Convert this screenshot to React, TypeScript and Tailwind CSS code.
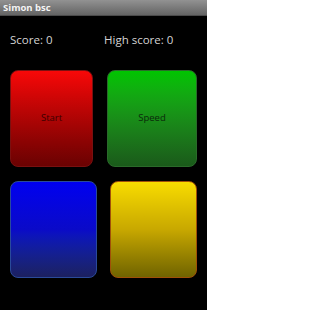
import React from "react";

export default function App() {
  return (
    <div className="w-[207px] h-[310px] bg-black overflow-hidden" style={{ fontFamily: '"Open Sans", "Noto Sans", sans-serif' }}>
      <div className="h-[16px] bg-gradient-to-b from-[#929292] to-[#646464] border-b border-[#4a4a4a] flex items-center pl-[3px]">
        <span className="text-[#f4f4f4] font-bold text-[9.5px] leading-none" style={{ fontFamily: '"Open Sans", sans-serif' }}>Simon bsc</span>
      </div>
      <div className="flex pt-[17px] h-[54px] text-[#d4d4d4] text-[11.5px] leading-[14px]">
        <div className="pl-[10px] w-[104px]">Score: 0</div>
        <div>High score: 0</div>
      </div>
      <div className="flex pl-[10px] gap-[14px]">
        <div className="w-[83px] h-[97px] rounded-[8px] border border-[#7a1010] bg-gradient-to-b from-[#f80808] to-[#6a0202] flex items-center justify-center">
          <span className="text-[9.5px] text-[#3a0000]">Start</span>
        </div>
        <div className="w-[90px] h-[97px] rounded-[8px] border border-[#2a6a2a] bg-gradient-to-b from-[#00c400] to-[#1a5a1a] flex items-center justify-center">
          <span className="text-[9.5px] text-[#0a2a0a]">Speed</span>
        </div>
      </div>
      <div className="flex pl-[10px] gap-[13px] mt-[14px]">
        <div className="w-[87px] h-[97px] rounded-[8px] border border-[#2a4a9a] bg-gradient-to-b from-[#0000f0] via-[#0a0ac8] to-[#1c2060]"></div>
        <div className="w-[87px] h-[97px] rounded-[8px] border border-[#a05008] bg-gradient-to-b from-[#f8dc00] via-[#c8a800] to-[#706400]"></div>
      </div>
    </div>
  );
}
